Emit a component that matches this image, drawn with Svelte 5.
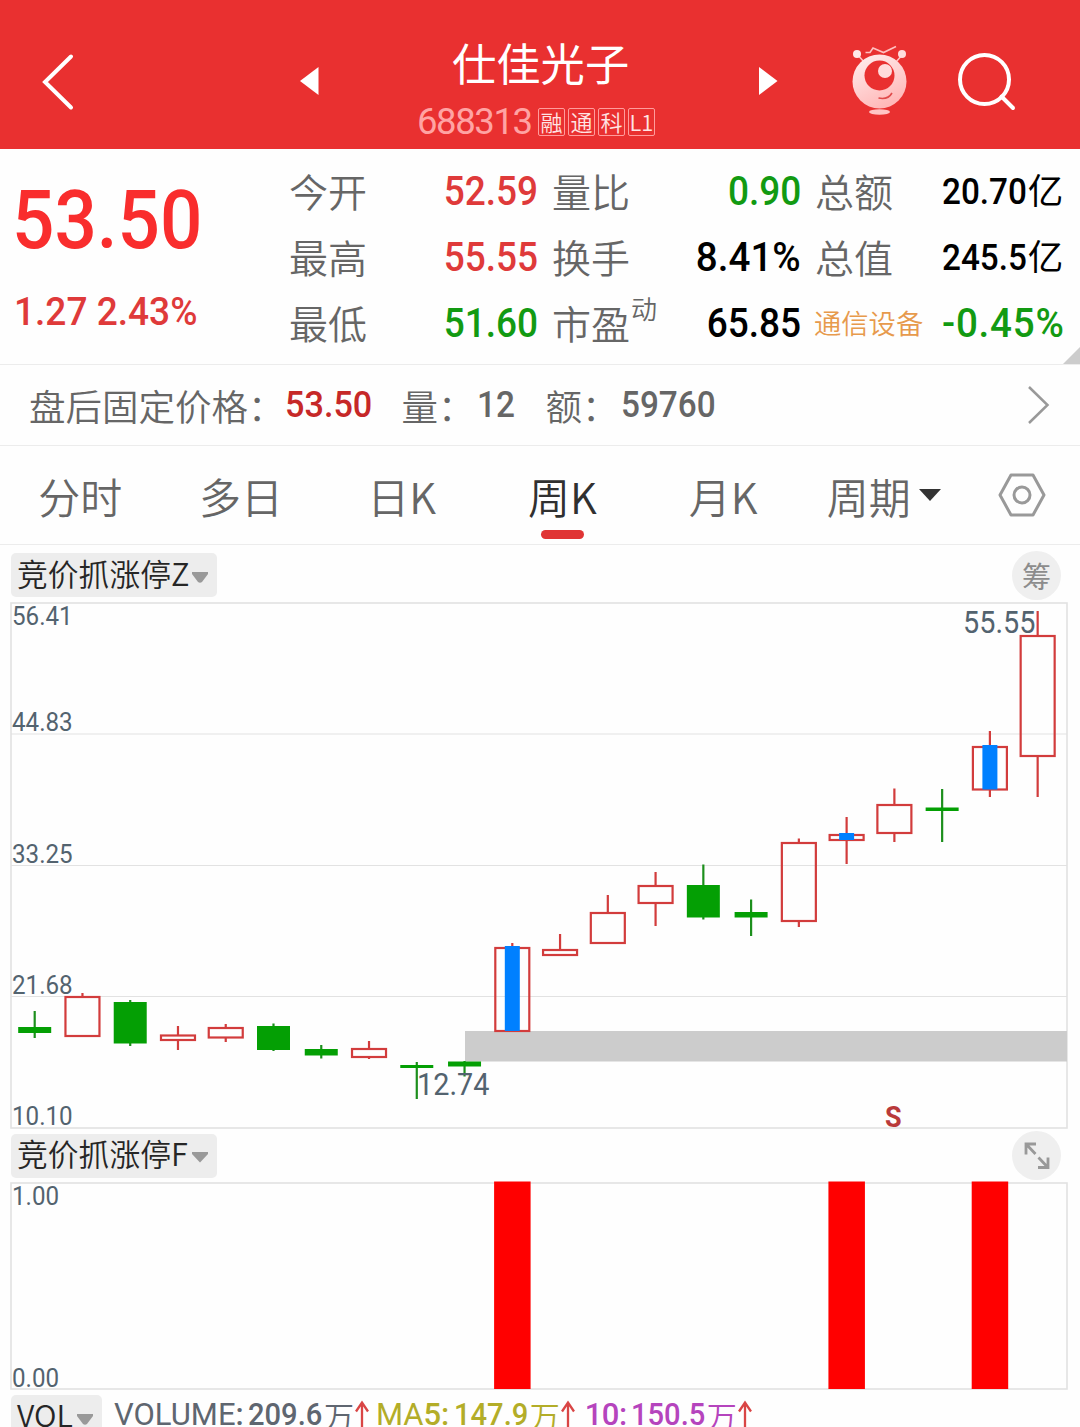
<script lang="ts">
  type Candle = {
    up: boolean;
    high: number;
    top: number;
    bottom: number;
    low: number;
    signal?: boolean;
  };

  const tags = ["融", "通", "科", "L1"];

  const quotes = [
    { label: "今开", value: "52.59", tone: "up" },
    { label: "量比", value: "0.90", tone: "down" },
    { label: "总额", value: "20.70", unit: "亿", tone: "flat" },
    { label: "最高", value: "55.55", tone: "up" },
    { label: "换手", value: "8.41%", tone: "flat" },
    { label: "总值", value: "245.5", unit: "亿", tone: "flat" },
    { label: "最低", value: "51.60", tone: "down" },
    { label: "市盈", sup: "动", value: "65.85", tone: "flat" },
    { label: "通信设备", link: true, value: "-0.45%", tone: "down" },
  ];

  const tabs = ["分时", "多日", "日K", "周K", "月K", "周期"];
  let active = $state("周K");

  // y values are in chart pixels
  const row = (
    up: number,
    high: number,
    top: number,
    bottom: number,
    low: number,
    signal = false,
  ): Candle => ({ up: !!up, high, top, bottom, low, signal });

  const candles: Candle[] = [
    row(0, 409, 425, 431, 436),
    row(1, 391, 394, 435, 435),
    row(0, 398, 400, 441.5, 444),
    row(1, 424, 432.5, 439, 448),
    row(1, 422, 425, 436.5, 440),
    row(0, 421.5, 424, 448, 449),
    row(0, 443, 447, 453.5, 456.5),
    row(1, 439, 446, 456, 457),
    row(0, 460, 463, 466, 497),
    row(0, 459, 459.5, 464.5, 474.5),
    row(1, 341, 345, 430, 430, true),
    row(1, 332, 347, 354, 354),
    row(1, 293, 310, 342, 342),
    row(1, 270, 283, 302, 324),
    row(0, 262.5, 283, 315.5, 317.5),
    row(0, 297.5, 310, 315.5, 334),
    row(1, 236.5, 240, 320, 325),
    row(1, 215, 232, 239, 262, true),
    row(1, 186.5, 202, 232, 240),
    row(0, 187, 205.5, 209, 240),
    row(1, 129, 144, 188.5, 195, true),
    row(1, 9, 33, 155, 195),
  ];

  const x = (i: number) => 34.7 + i * 47.76;

  const axis = [
    { text: "56.41", y: 23 },
    { text: "44.83", y: 129 },
    { text: "33.25", y: 261 },
    { text: "21.68", y: 392 },
    { text: "10.10", y: 523 },
  ];

  const bars = [10, 17, 20];
</script>

<main>
  <header>
    <svg class="back" viewBox="0 0 34 58">
      <path d="M30 3.500L4 29L30 54.500" />
    </svg>
    <svg class="arrow" viewBox="0 0 20 28"><path d="M0 14L18.500 0V28Z" /></svg>
    <div class="name">
      <h1>仕佳光子</h1>
      <div class="code">
        <span>688313</span>
        {#each tags as tag}
          <i>{tag}</i>
        {/each}
      </div>
    </div>
    <svg class="arrow next" viewBox="0 0 20 28"><path d="M18.500 14L0 0V28Z" /></svg>
    <svg class="robot" viewBox="0 0 60 72">
      <defs>
        <linearGradient id="skin" x1="0" y1="0" x2="0.500" y2="1">
          <stop offset="0" stop-color="#fff0f0" />
          <stop offset="1" stop-color="#ffb9b9" />
        </linearGradient>
      </defs>
      <path class="spark" d="M15.500 8.500H20L23 4L33.500 8.500L46 2.500" />
      <path class="feeler" d="M7 10L14 18M53 10L46 18" />
      <circle cx="7" cy="10" r="4" fill="#ffe9e9" />
      <circle cx="52" cy="10" r="4" fill="#ffdcdc" />
      <circle cx="29.500" cy="37.500" r="27" fill="url(#skin)" />
      <circle cx="29.500" cy="31.500" r="15" fill="#e93030" />
      <circle cx="35" cy="27" r="7" fill="#ffdcdc" />
      <path class="smile" d="M28.500 54Q38 56 42 49" />
      <ellipse cx="29.500" cy="68" rx="10.500" ry="2.700" fill="#ffc4c4" />
    </svg>
    <svg class="search" viewBox="0 0 60 60">
      <circle cx="27.500" cy="27.500" r="24.500" />
      <path d="M44.500 44.500L56 56" />
    </svg>
  </header>

  <section class="quote">
    <div class="price">
      <strong class="num">53.50</strong>
      <span class="num">1.27 2.43%</span>
    </div>
    <div class="stats">
      {#each quotes as q}
        <div class="label" class:link={q.link}>
          {q.label}{#if q.sup}<sup>{q.sup}</sup>{/if}
        </div>
        <div class="value {q.tone}" class:money={q.unit}>
          <span class="num" class:percent={q.value.endsWith("%")}>{q.value}</span
          >{#if q.unit}<small>{q.unit}</small>{/if}
        </div>
      {/each}
    </div>
    <div class="corner"></div>
  </section>

  <section class="after">
    <span class="key">盘后固定价格：</span><b class="num">53.50</b>
    <span class="key vol">量：</span><span class="num">12</span>
    <span class="key amount">额：</span><span class="num">59760</span>
    <svg viewBox="0 0 24 40"><path d="M3 2L21.500 20L3 38" /></svg>
  </section>

  <nav>
    {#each tabs as tab}
      <button class:active={tab === active} onclick={() => (active = tab)}>
        {tab}
        {#if tab === "周期"}
          <svg class="caret" viewBox="0 0 22 12"><path d="M0 0H22L11 12Z" /></svg>
        {/if}
      </button>
    {/each}
    <svg class="settings" viewBox="0 0 48 44">
      <path d="M13 2H35L46 22L35 42H13L2 22Z" />
      <circle cx="24" cy="22" r="8" />
    </svg>
  </nav>

  <div class="bar">
    <button class="pick">
      竞价抓涨停Z<svg viewBox="0 0 16 11"><path d="M0 0H16V2L10 10Q8 11.500 6 10L0 2Z" /></svg>
    </button>
    <button class="round">筹</button>
  </div>

  <svg class="chart" viewBox="0 0 1080 528" width="1080" height="528">
    <path class="grid" d="M11 132H1067M11 263.500H1067M11 394.500H1067" />
    <rect class="frame" x="11" y="1" width="1056" height="525" />
    <rect x="465" y="429" width="602" height="30.500" fill="#ccc" />
    {#each axis as a}
      <text class="axis" x="12" y={a.y}>{a.text}</text>
    {/each}
    {#each candles as c, i}
      {#if c.up}
        <g class="rise">
          <path d="M{x(i)} {c.high}V{c.top + 1}M{x(i)} {c.bottom - 1}V{c.low}" />
          <rect x={x(i) - 17} y={c.top + 1} width="34" height={c.bottom - c.top - 2} />
        </g>
      {:else}
        <g class="fall">
          <path d="M{x(i)} {c.high}V{c.low}" />
          <rect x={x(i) - 16.5} y={c.top} width="33" height={c.bottom - c.top} />
        </g>
      {/if}
      {#if c.signal}
        <rect x={x(i) - 7.5} y={c.top - 1} width="15" height={c.bottom - c.top} fill="#0080ff" />
      {/if}
    {/each}
    <text class="peak" x="963" y="31">55.55</text>
    <text class="peak" x="417" y="493">12.74</text>
    <text class="sell" x="885" y="525">S</text>
  </svg>

  <div class="bar second">
    <button class="pick">
      竞价抓涨停F<svg viewBox="0 0 16 11"><path d="M0 0H16V2L8 10.500L0 2Z" /></svg>
    </button>
    <button class="round">
      <svg viewBox="0 0 26 28">
        <path d="M2 12.500V2H12M2.500 2.500L11.500 12M24 15.500V25.500H14M23.500 25L14.500 15.500" />
      </svg>
    </button>
  </div>

  <svg class="chart" viewBox="0 0 1080 209" width="1080" height="209">
    <rect class="frame" x="11" y="2" width="1056" height="206" />
    <text class="axis" x="12" y="24">1.00</text>
    <text class="axis" x="12" y="206">0.00</text>
    {#each bars as i}
      <rect x={x(i) - 18.2} y="0.500" width="36.500" height="207.500" fill="#f00" />
    {/each}
  </svg>

  <div class="volume">
    <button class="pick">
      VOL<svg viewBox="0 0 16 11"><path d="M0 0H16V2L10 10Q8 11.500 6 10L0 2Z" /></svg>
    </button>
    {#snippet reading(cls: string, name: string, period: string, value: string)}
      <span class="reading {cls}">
        <em>{name}<b>{period}:</b></em><span class="num">{value}</span>万<svg
          viewBox="0 0 14 28"
        >
          <path d="M7 28V2M1 11.500L7 2.500L13 11.500" />
        </svg>
      </span>
    {/snippet}
    {@render reading("total", "VOLUME", "", "209.6")}
    {@render reading("ma5", "MA", "5", "147.9")}
    {@render reading("ma10", "", "10", "150.5")}
  </div>
</main>

<style>
  :global(body) {
    background: #fff;
    overflow: hidden;
  }

  main {
    width: 1080px;
    height: 1427px;
    overflow: hidden;
    background: #fefefe;
    color: #666;
    font-family: "Noto Sans CJK SC", sans-serif;
    font-weight: 350;
  }

  svg {
    display: block;
    flex: none;
  }

  button {
    padding: 0;
    border: none;
    background: none;
    color: inherit;
    font: inherit;
    white-space: nowrap;
  }

  /* squeezed Roboto for all figures */
  .num {
    display: inline-block;
    font-family: Roboto, sans-serif;
    font-weight: 500;
    transform: scaleX(0.925);
    transform-origin: left;
  }

  header {
    display: flex;
    box-sizing: border-box;
    height: 149px;
    padding: 14px 64px 0 41px;
    align-items: center;
    background: #e93030;
    color: #fff;
  }

  .back {
    width: 34px;
    height: 58px;
  }

  .back path,
  .search {
    fill: none;
    stroke: #fff;
    stroke-width: 4;
    stroke-linecap: round;
  }

  .arrow {
    width: 20px;
    height: 28px;
    margin-top: -1px;
    margin-left: 225px;
    fill: #fff;
  }

  .next {
    margin-left: 104px;
  }

  .name {
    width: 240px;
    margin-left: 97px;
    margin-top: 5px;
  }

  h1 {
    margin: 0 0 0 35px;
    font-size: 44.3px;
    font-weight: 400;
    line-height: 58px;
    white-space: nowrap;
  }

  .code {
    display: flex;
    align-items: center;
    height: 28px;
    margin-top: 17px;
    gap: 3px;
  }

  .code span {
    width: 118px;
    color: #ffa3a3;
    font: 400 36.5px/28px Roboto, sans-serif;
    letter-spacing: -1.4px;
  }

  .code i {
    display: flex;
    box-sizing: border-box;
    width: 27px;
    height: 28px;
    padding-bottom: 2px;
    align-items: center;
    justify-content: center;
    border: 1px solid #ff9c9c;
    border-radius: 2px;
    color: #ffe4e4;
    font-style: normal;
    font-size: 22px;
  }

  .robot {
    width: 60px;
    height: 72px;
    margin-top: -3px;
    margin-left: 71px;
  }

  .spark,
  .feeler,
  .smile {
    fill: none;
    stroke: #ffc0c0;
    stroke-width: 1.6;
  }

  .smile {
    stroke: #e04a4a;
  }

  .search {
    width: 60px;
    height: 60px;
    margin-left: 47px;
  }

  .quote {
    position: relative;
    display: flex;
    box-sizing: border-box;
    height: 216px;
    padding: 10px 0 0 14px;
    border-bottom: 1.5px solid #ececec;
  }

  .price {
    display: flex;
    width: 275px;
    flex-direction: column;
    align-items: flex-start;
    color: #f92d2d;
  }

  .price strong {
    margin: 11px 0 0 -2px;
    font-size: 82px;
    line-height: 100px;
    transform: scaleX(0.91);
  }

  .price span {
    margin-top: 18px;
    color: #df3a3a;
    font-size: 39px;
    line-height: 48px;
    white-space: pre;
    transform: scaleX(0.95);
  }

  .stats {
    display: grid;
    grid-template-columns: 110px 139px 14px 110px 139px 14px 127px 130px;
    grid-auto-rows: 66px;
    white-space: nowrap;
  }

  .label {
    font-size: 39px;
    line-height: 63px;
  }

  .label:nth-child(6n + 3) {
    grid-column: 4;
  }

  .label:nth-child(6n + 5) {
    grid-column: 7;
  }

  .label sup {
    position: relative;
    top: -20px;
    margin-left: 1px;
    font-size: 26px;
    line-height: 0;
    vertical-align: baseline;
  }

  .link {
    margin-left: -1px;
    color: #e79a4c;
    font-size: 27.3px;
  }

  .value {
    font-family: Roboto, "Noto Sans CJK SC", sans-serif;
    font-size: 40px;
    line-height: 65px;
    text-align: right;
  }

  .value .num {
    transform-origin: right;
  }

  .value .percent {
    transform: scaleX(0.965);
  }

  .value:nth-child(6n) {
    text-align: left;
  }

  .value:nth-child(6n) .num {
    transform-origin: left;
  }

  .value:nth-child(6n) .percent {
    letter-spacing: 0.8px;
  }

  .value.money {
    font-size: 36px;
    line-height: 66px;
  }

  .money .num {
    margin-right: -6px;
  }

  .money small {
    font-size: 35.5px;
    font-weight: 400;
  }

  .up {
    color: #df3a3a;
  }

  .down {
    color: #129a12;
  }

  .flat {
    color: #000;
  }

  .corner {
    position: absolute;
    right: 0;
    bottom: 0;
    width: 17px;
    height: 17px;
    background: #ccc;
    clip-path: polygon(100% 0, 100% 100%, 0 100%);
  }

  .after {
    display: flex;
    box-sizing: border-box;
    height: 81px;
    padding: 0 30px 0 29px;
    align-items: center;
    border-bottom: 1.5px solid #ececec;
    font-size: 36.5px;
  }

  .after .num {
    margin-bottom: 2px;
    font-size: 37px;
    transform: scaleX(0.9);
  }

  .after b.num {
    width: 117px;
    color: #c62828;
    transform: scaleX(0.925);
  }

  .after .vol {
    width: 75px;
  }

  .after .vol + .num {
    width: 69px;
  }

  .after .amount {
    width: 75px;
  }

  .after svg {
    width: 24px;
    height: 40px;
    margin-left: auto;
    fill: none;
    stroke: #999;
    stroke-width: 2.5;
  }

  nav {
    display: flex;
    box-sizing: border-box;
    height: 99px;
    align-items: center;
    border-bottom: 1.5px solid #ececec;
  }

  nav button {
    position: relative;
    display: flex;
    box-sizing: border-box;
    width: 160.7px;
    height: 98px;
    align-items: center;
    justify-content: center;
    font-size: 42px;
  }

  nav .active {
    color: #303030;
  }

  nav .active::after {
    position: absolute;
    bottom: 5px;
    left: 59px;
    width: 43px;
    height: 9px;
    border-radius: 5px;
    background: #e03434;
    content: "";
  }

  .caret {
    width: 22px;
    height: 12px;
    margin: -1px 0 0 8px;
    fill: #333;
  }

  .settings {
    width: 48px;
    height: 44px;
    margin-left: 34px;
    fill: none;
    stroke: #999;
    stroke-width: 3;
    stroke-linejoin: round;
  }

  .bar {
    display: flex;
    box-sizing: border-box;
    height: 57px;
    padding: 3px 19px 0 11px;
    align-items: center;
    justify-content: space-between;
  }

  .bar.second {
    height: 51px;
    padding-top: 0;
  }

  .pick {
    display: flex;
    height: 44px;
    padding: 0 9px 6px 6px;
    box-sizing: border-box;
    align-items: center;
    border-radius: 5px;
    background: #ededed;
    color: #262626;
    font-size: 30.8px;
  }

  .bar .pick {
    width: 206px;
  }

  .pick svg {
    width: 16px;
    height: 11px;
    margin: 10px 0 0 auto;
    fill: #999;
  }

  .round {
    display: flex;
    width: 49px;
    height: 49px;
    align-items: center;
    justify-content: center;
    border-radius: 50%;
    background: #efefef;
    color: #8c8c8c;
    font-size: 29px;
    font-weight: 400;
    line-height: 1;
  }

  .round svg {
    width: 26px;
    height: 28px;
    fill: none;
    stroke: #999;
    stroke-width: 2.8;
  }

  .chart text {
    fill: #53636f;
    font-family: Roboto, sans-serif;
    font-weight: 450;
    transform: scaleX(0.93);
    transform-box: fill-box;
    transform-origin: left;
  }

  .chart .axis {
    font-size: 26px;
  }

  .chart .peak {
    font-size: 31px;
  }

  .chart .sell {
    fill: #b93a3a;
    font-size: 29px;
    font-weight: 700;
  }

  .grid,
  .frame {
    fill: none;
    stroke: #e2e2e2;
    stroke-width: 1.2;
  }

  .frame {
    stroke-width: 1.6;
  }

  .rise {
    fill: none;
    stroke: #d23c3c;
    stroke-width: 2.2;
  }

  .fall {
    fill: #049f04;
  }

  .fall path {
    stroke: #1c8f1c;
    stroke-width: 2.2;
  }

  .volume {
    display: flex;
    height: 44px;
    padding: 5px 0 0 11px;
    font-size: 30px;
    line-height: 40px;
  }

  .volume .pick {
    width: 91px;
    margin-right: 12px;
    font-size: 30.5px;
  }

  .reading {
    display: flex;
    color: #5f6670;
  }

  .reading em {
    width: 134px;
    font-family: Roboto, sans-serif;
    font-weight: 400;
    font-size: 31px;
    font-style: normal;
  }

  .reading b {
    font-weight: 500;
  }

  .reading .num {
    margin-right: -4.5px;
    font-size: 31.5px;
  }

  .reading svg {
    width: 14px;
    height: 28px;
    margin: 5px 7px 0 1px;
    fill: none;
    stroke: #d94545;
    stroke-width: 2.3;
  }

  .ma5 {
    color: #b3ad28;
  }

  .ma5 em {
    width: 78px;
  }

  .ma5 svg {
    margin-right: 10px;
  }

  .ma10 {
    color: #b544bd;
  }

  .ma10 em {
    width: 46px;
    letter-spacing: -0.5px;
  }
</style>
